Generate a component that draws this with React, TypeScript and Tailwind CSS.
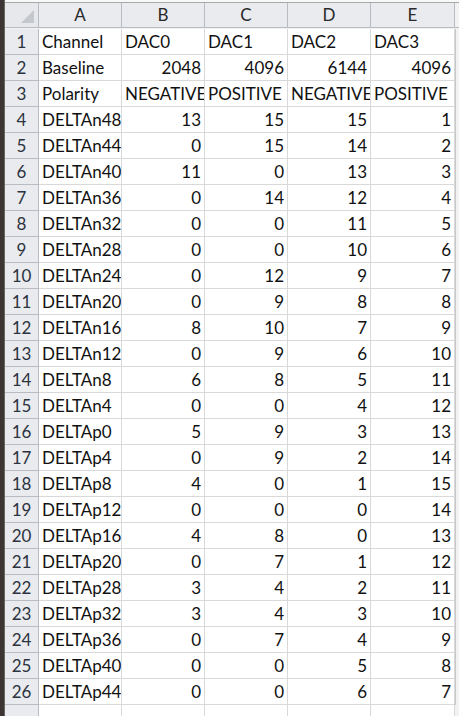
import React from "react";

const rows: (string | number)[][] = [
  ["Channel", "DAC0", "DAC1", "DAC2", "DAC3"],
  ["Baseline", 2048, 4096, 6144, 4096],
  ["Polarity", "NEGATIVE", "POSITIVE", "NEGATIVE", "POSITIVE"],
  ["DELTAn48", 13, 15, 15, 1],
  ["DELTAn44", 0, 15, 14, 2],
  ["DELTAn40", 11, 0, 13, 3],
  ["DELTAn36", 0, 14, 12, 4],
  ["DELTAn32", 0, 0, 11, 5],
  ["DELTAn28", 0, 0, 10, 6],
  ["DELTAn24", 0, 12, 9, 7],
  ["DELTAn20", 0, 9, 8, 8],
  ["DELTAn16", 8, 10, 7, 9],
  ["DELTAn12", 0, 9, 6, 10],
  ["DELTAn8", 6, 8, 5, 11],
  ["DELTAn4", 0, 0, 4, 12],
  ["DELTAp0", 5, 9, 3, 13],
  ["DELTAp4", 0, 9, 2, 14],
  ["DELTAp8", 4, 0, 1, 15],
  ["DELTAp12", 0, 0, 0, 14],
  ["DELTAp16", 4, 8, 0, 13],
  ["DELTAp20", 0, 7, 1, 12],
  ["DELTAp28", 3, 4, 2, 11],
  ["DELTAp32", 3, 4, 3, 10],
  ["DELTAp36", 0, 7, 4, 9],
  ["DELTAp40", 0, 0, 5, 8],
  ["DELTAp44", 0, 0, 6, 7],
];

const cols = ["A", "B", "C", "D", "E"];

export default function App() {
  return (
    <div
      className="w-[459px] h-[716px] overflow-hidden flex bg-[#f2f2f2] text-[#111]"
      style={{ fontFamily: "Lato, 'Open Sans', sans-serif" }}
    >
      <div className="w-[5px] h-full bg-[#3b3633] border-r border-[#6b6560]" />
      <div className="flex-1 flex flex-col">
        <div className="h-[9px] bg-[#f4f4f4] border-t-2 border-t-[#f8f8f8]">
          <div className="h-[1px] bg-[#a9a9a9]" />
        </div>
        <div className="grid grid-cols-[34px_83px_83px_83px_83px_84px_1fr] auto-rows-[26px]">
          {/* header row */}
          <div className="h-[25px] bg-[#e6e8eb] border-r border-b border-[#b8bcc2] relative">
            <div className="absolute right-[4px] bottom-[4px] w-0 h-0 border-l-[13px] border-l-transparent border-b-[13px] border-b-[#c4c7cc]" />
          </div>
          {cols.map((c) => (
            <div
              key={c}
              className="h-[25px] bg-[#e9ebee] border-r border-b border-[#b8bcc2] flex items-center justify-center text-[17px] text-[#2a2a2a]"
            >
              {c}
            </div>
          ))}
          <div className="h-[25px] bg-[#f2f2f2] border-b border-[#b8bcc2]" />
          {rows.map((r, i) => (
            <React.Fragment key={i}>
              <div className="bg-[#e9ebee] border-r border-b border-[#b8bcc2] flex items-center justify-center text-[17px] text-[#2c3340]">
                {i + 1}
              </div>
              {r.map((v, j) => (
                <div
                  key={j}
                  className={
                    "bg-white border-r border-b border-[#d9d9d9] flex items-center overflow-hidden whitespace-nowrap text-[17px] px-[3px] " +
                    (typeof v === "number" ? "justify-end" : "justify-start")
                  }
                >
                  {v}
                </div>
              ))}
              <div className="bg-[#f2f2f2] border-l border-[#c8c8c8]" />
            </React.Fragment>
          ))}
          <div className="bg-[#e9ebee] border-r border-[#b8bcc2]" />
          {cols.map((c) => (
            <div key={"x" + c} className="bg-white border-r border-[#d9d9d9]" />
          ))}
          <div className="bg-[#f2f2f2]" />
        </div>
      </div>
    </div>
  );
}
